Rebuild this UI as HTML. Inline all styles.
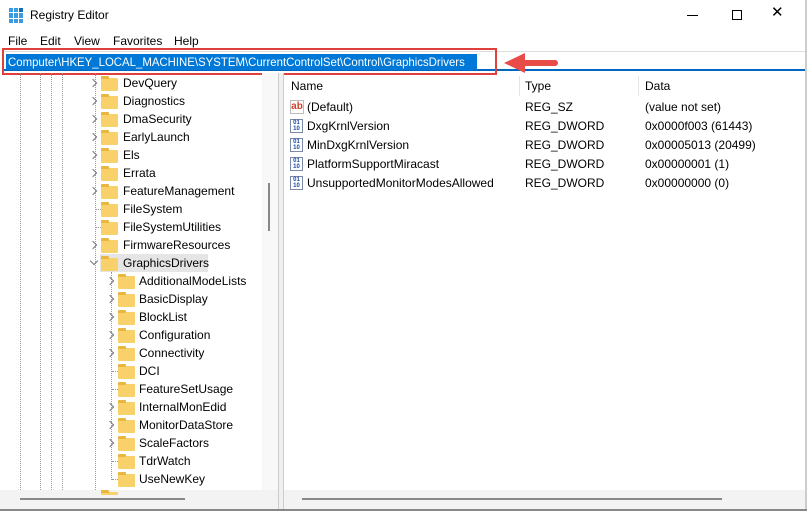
<!DOCTYPE html>
<html><head><meta charset="utf-8"><style>
*{margin:0;padding:0;box-sizing:border-box}
body{width:807px;height:511px;overflow:hidden;background:#fff;font-family:"Liberation Sans",sans-serif;font-size:12px;color:#000;position:relative}
.a{position:absolute;white-space:nowrap}
.fold{position:absolute;width:17px;height:13px;background:#f8d16a;border-radius:1px}
.fold:before{content:"";position:absolute;left:0;top:-2px;width:8px;height:3px;background:#e9b73f;border-radius:1px 1px 0 0}
.chev{position:absolute;width:6px;height:6px;border-right:1.3px solid #777;border-top:1.3px solid #777;transform:rotate(45deg)}
.dv{position:absolute;border-left:1px dotted #999;width:0}
.dh{position:absolute;border-top:1px dotted #999;height:0}
.ic{position:absolute;width:13px;height:14px;border:1px solid #7a8aa6;background:#fff;font-size:6px;line-height:6px;color:#1a4aa8;font-weight:bold;text-align:center}
</style></head><body>
<!-- title -->
<div class="a" style="left:9px;top:8px;width:15px;height:15px;display:grid;grid-template-columns:repeat(3,4px);gap:1px">
<div style="background:#3b9be0"></div><div style="background:#3b9be0"></div><div style="background:#0f6fc0"></div>
<div style="background:#3b9be0"></div><div style="background:#3b9be0"></div><div style="background:#3b9be0"></div>
<div style="background:#3b9be0"></div><div style="background:#3b9be0"></div><div style="background:#3b9be0"></div></div>
<div class="a" style="left:30px;top:8px;font-size:12px">Registry Editor</div>
<div class="a" style="left:687px;top:15px;width:11px;border-top:1px solid #000"></div>
<div class="a" style="left:732px;top:10px;width:10px;height:10px;border:1px solid #000"></div>
<div class="a" style="left:771px;top:3px;font-size:15px">✕</div>
<div class="a" style="left:8px;top:34px">File</div>
<div class="a" style="left:40px;top:34px">Edit</div>
<div class="a" style="left:74px;top:34px">View</div>
<div class="a" style="left:113px;top:34px">Favorites</div>
<div class="a" style="left:174px;top:34px">Help</div>
<!-- address -->
<div class="a" style="left:3px;top:51px;width:802px;height:20px;border-top:1px solid #ddd;border-bottom:2px solid #0067c0"></div>
<div class="a" style="left:6px;top:54px;width:471px;height:16px;background:#0078d7"></div>
<div class="a" style="left:8px;top:55px;color:#fff;font-size:12px;transform:scaleX(0.95);transform-origin:0 0">Computer\HKEY_LOCAL_MACHINE\SYSTEM\CurrentControlSet\Control\GraphicsDrivers</div>
<div class="a" style="left:2px;top:48px;width:495px;height:27px;border:2px solid #e0403c"></div>
<svg class="a" style="left:500px;top:50px" width="62" height="26"><path d="M4 13 L25 3 L25 10 L56 10 Q60 13 56 16 L25 16 L25 23 Z" fill="#e84c47"/></svg>
<!-- panes -->
<div class="a" style="left:278px;top:73px;width:6px;height:436px;background:#f0f0f0;border-left:1px solid #ccc;border-right:1px solid #ccc"></div>
<div class="a" style="left:0;top:490px;width:278px;height:19px;background:#f3f3f3"></div>
<div class="a" style="left:284px;top:490px;width:521px;height:19px;background:#f3f3f3"></div>
<div class="a" style="left:20px;top:498px;width:165px;height:2px;background:#888"></div>
<div class="a" style="left:302px;top:498px;width:420px;height:2px;background:#888"></div>
<div class="a" style="left:262px;top:73px;width:16px;height:417px;background:#f8f8f8"></div>
<div class="a" style="left:268px;top:183px;width:2px;height:48px;background:#888"></div>
<div class="a" style="left:805px;top:0;width:2px;height:511px;background:#ccc"></div>
<div class="a" style="left:0;top:509px;width:807px;height:2px;background:#888"></div>
<!-- dotted verticals -->
<div class="dv" style="left:20px;top:73px;height:417px"></div>
<div class="dv" style="left:40px;top:73px;height:417px"></div>
<div class="dv" style="left:51px;top:73px;height:417px"></div>
<div class="dv" style="left:62px;top:73px;height:417px"></div>
<div class="dv" style="left:95px;top:73px;height:417px"></div>
<div class="dv" style="left:111px;top:272px;height:208px"></div>
<div class="a" style="left:100px;top:254px;width:108px;height:18px;background:#e5e5e5"></div>
<div id="tree"></div>
<script>
var r=[["DevQuery",1,1],["Diagnostics",1,1],["DmaSecurity",1,1],["EarlyLaunch",1,1],["Els",1,1],["Errata",1,1],["FeatureManagement",1,1],["FileSystem",1,0],["FileSystemUtilities",1,0],["FirmwareResources",1,1],["GraphicsDrivers",1,2],
["AdditionalModeLists",2,1],["BasicDisplay",2,1],["BlockList",2,1],["Configuration",2,1],["Connectivity",2,1],["DCI",2,0],["FeatureSetUsage",2,0],["InternalMonEdid",2,1],["MonitorDataStore",2,1],["ScaleFactors",2,1],["TdrWatch",2,0],["UseNewKey",2,0]];
var h="";
r.forEach(function(e,i){var c=83+i*18;var L=e[1]==1;var cx=L?90:107,fx=L?101:118,tx=L?123:139;
if(e[2]==1)h+='<div class="chev" style="left:'+(cx)+'px;top:'+(c-3)+'px"></div>';
else if(e[2]==2)h+='<div class="chev" style="left:'+(cx+1)+'px;top:'+(c-5)+'px;transform:rotate(135deg)"></div>';
else h+='<div class="dh" style="left:'+(cx+5)+'px;top:'+c+'px;width:'+(fx-cx-5)+'px"></div>';
h+='<div class="fold" style="left:'+fx+'px;top:'+(c-5)+'px;z-index:2"></div>';
h+='<div class="a" style="left:'+tx+'px;top:'+(c-7)+'px;z-index:2">'+e[0]+'</div>';});
h+='<div class="fold" style="left:101px;top:492px;height:3px"></div>';
document.getElementById("tree").innerHTML=h;
</script>
<!-- right list -->
<div class="a" style="left:291px;top:79px">Name</div>
<div class="a" style="left:519px;top:76px;height:20px;border-left:1px solid #e5e5e5"></div>
<div class="a" style="left:525px;top:79px">Type</div>
<div class="a" style="left:638px;top:76px;height:20px;border-left:1px solid #e5e5e5"></div>
<div class="a" style="left:645px;top:79px">Data</div>
<div class="a" style="left:290px;top:100px;width:14px;height:14px;border:1px solid #bbb;color:#d0402a;font-size:10px;font-weight:bold;line-height:11px;text-align:center">ab</div>
<div class="a" style="left:307px;top:100px">(Default)</div><div class="a" style="left:525px;top:100px">REG_SZ</div><div class="a" style="left:645px;top:100px">(value not set)</div>
<div class="ic" style="left:290px;top:119px">01<br>10</div><div class="a" style="left:307px;top:119px">DxgKrnlVersion</div><div class="a" style="left:525px;top:119px">REG_DWORD</div><div class="a" style="left:645px;top:119px">0x0000f003 (61443)</div>
<div class="ic" style="left:290px;top:138px">01<br>10</div><div class="a" style="left:307px;top:138px">MinDxgKrnlVersion</div><div class="a" style="left:525px;top:138px">REG_DWORD</div><div class="a" style="left:645px;top:138px">0x00005013 (20499)</div>
<div class="ic" style="left:290px;top:157px">01<br>10</div><div class="a" style="left:307px;top:157px">PlatformSupportMiracast</div><div class="a" style="left:525px;top:157px">REG_DWORD</div><div class="a" style="left:645px;top:157px">0x00000001 (1)</div>
<div class="ic" style="left:290px;top:176px">01<br>10</div><div class="a" style="left:307px;top:176px">UnsupportedMonitorModesAllowed</div><div class="a" style="left:525px;top:176px">REG_DWORD</div><div class="a" style="left:645px;top:176px">0x00000000 (0)</div>
</body></html>
